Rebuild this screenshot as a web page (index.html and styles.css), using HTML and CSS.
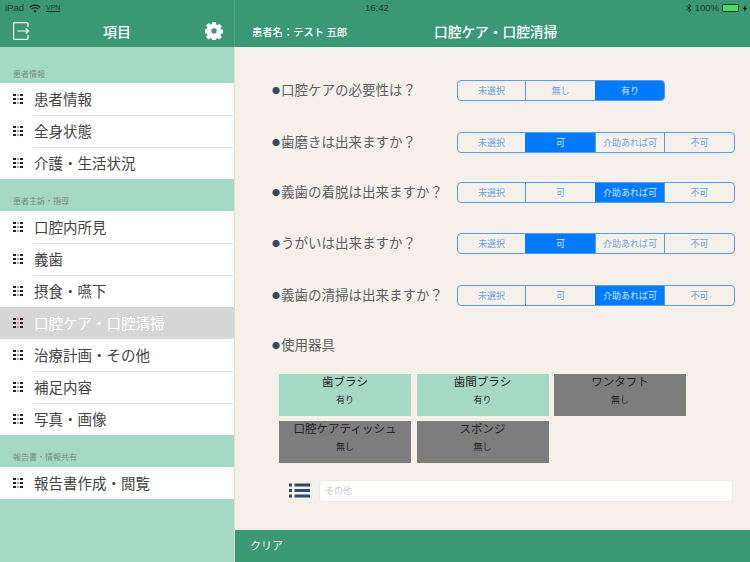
FILE: index.html
```html
<!DOCTYPE html>
<html lang="ja">
<head>
<meta charset="utf-8">
<title>口腔ケア・口腔清掃</title>
<link rel="stylesheet" href="styles.css">
</head>
<body>
<div class="app">
  <aside class="side">
    <header class="side-head">
      <div class="status">
        <span>iPad</span>
        <svg class="wifi" width="12" height="9" viewBox="0 0 12 9" fill="none" stroke="#15281f" stroke-width="1.300"><path d="M0.800 3.200a7.500 7.500 0 0 1 10.400 0"/><path d="M2.700 5.100a4.800 4.800 0 0 1 6.600 0"/><path d="M6 8.800 4.400 7a2.300 2.300 0 0 1 3.200 0Z" fill="#15281f" stroke="none"/></svg>
        <span class="vpn">VPN</span>
      </div>
      <div class="side-bar">
        <svg class="exit" width="16" height="18" viewBox="0 0 16 18" fill="none" stroke="#fff" stroke-width="1.200"><path d="M15 5V1.800A1.200 1.200 0 0 0 13.800 .6H1.800A1.200 1.200 0 0 0 .6 1.800v14.400a1.200 1.200 0 0 0 1.200 1.200h12a1.200 1.200 0 0 0 1.200-1.200V13"/><path d="M4.500 9H15.500M12.800 6.500 15.500 9l-2.700 2.500"/></svg>
        <span class="side-title">項目</span>
        <svg class="gear" width="18" height="18" viewBox="0 0 18 18"><path fill="#fff" stroke="#fff" stroke-width="0.800" stroke-linejoin="round" fill-rule="evenodd" d="M7.600 .6h2.800l.5 2.300 1.500.6 2-1.300 2 2-1.300 2 .6 1.500 2.300.5v2.800l-2.300.5-.6 1.500 1.300 2-2 2-2-1.300-1.500.6-.5 2.300H7.600l-.5-2.300-1.500-.6-2 1.300-2-2 1.300-2-.6-1.500-2.300-.5V7.600l2.300-.5.600-1.500-1.300-2 2-2 2 1.300 1.500-.6ZM9 5.800a3.200 3.200 0 1 0 0 6.400 3.200 3.200 0 0 0 0-6.400Z"/></svg>
      </div>
    </header>
    <div class="sec sec-first">患者情報</div>
    <ul class="list">
      <li class="row"><i class="dots"></i><span class="lbl">患者情報</span></li>
      <li class="row"><i class="dots"></i><span class="lbl">全身状態</span></li>
      <li class="row"><i class="dots"></i><span class="lbl">介護・生活状況</span></li>
    </ul>
    <div class="sec">患者主訴・指導</div>
    <ul class="list">
      <li class="row"><i class="dots"></i><span class="lbl">口腔内所見</span></li>
      <li class="row"><i class="dots"></i><span class="lbl">義歯</span></li>
      <li class="row"><i class="dots"></i><span class="lbl">摂食・嚥下</span></li>
      <li class="row on"><i class="dots"></i><span class="lbl">口腔ケア・口腔清掃</span></li>
      <li class="row"><i class="dots"></i><span class="lbl">治療計画・その他</span></li>
      <li class="row"><i class="dots"></i><span class="lbl">補足内容</span></li>
      <li class="row"><i class="dots"></i><span class="lbl">写真・画像</span></li>
    </ul>
    <div class="sec">報告書・情報共有</div>
    <ul class="list">
      <li class="row"><i class="dots"></i><span class="lbl">報告書作成・閲覧</span></li>
    </ul>
  </aside>
  <main class="main">
    <header class="main-head">
      <div class="status status-main">
        <span class="clock">16:42</span>
        <div class="status-right">
          <svg width="6" height="10" viewBox="0 0 6 10" fill="none" stroke="#1c3a2c" stroke-width="0.900"><path d="M0.500 2.800 5 7 3 9V1l2 2L0.500 7.200"/></svg>
          <span>100%</span>
          <span class="batt"><span class="batt-fill"></span></span>
          <svg class="bolt" width="4" height="7" viewBox="0 0 4 7"><path d="M2.500 0 0 4h1.500L1.200 7 4 3H2.400Z" fill="#111"/></svg>
        </div>
      </div>
      <div class="main-bar">
        <span class="patient">患者名：テスト 五郎</span>
        <span class="main-title">口腔ケア・口腔清掃</span>
      </div>
    </header>
    <div class="content">
      <div class="q q1">
        <span class="qt"><span class="dot">●</span>口腔ケアの必要性は？</span>
        <div class="seg seg3"><span>未選択</span><span>無し</span><span class="sel">有り</span></div>
      </div>
      <div class="q q2">
        <span class="qt"><span class="dot">●</span>歯磨きは出来ますか？</span>
        <div class="seg"><span>未選択</span><span class="sel">可</span><span>介助あれば可</span><span>不可</span></div>
      </div>
      <div class="q q3">
        <span class="qt"><span class="dot">●</span>義歯の着脱は出来ますか？</span>
        <div class="seg"><span>未選択</span><span>可</span><span class="sel">介助あれば可</span><span>不可</span></div>
      </div>
      <div class="q q4">
        <span class="qt"><span class="dot">●</span>うがいは出来ますか？</span>
        <div class="seg"><span>未選択</span><span class="sel">可</span><span>介助あれば可</span><span>不可</span></div>
      </div>
      <div class="q q5">
        <span class="qt"><span class="dot">●</span>義歯の清掃は出来ますか？</span>
        <div class="seg"><span>未選択</span><span>可</span><span class="sel">介助あれば可</span><span>不可</span></div>
      </div>
      <div class="tools-label qt"><span class="dot">●</span>使用器具</div>
      <div class="tools">
        <div class="tool yes"><b>歯ブラシ</b><small>有り</small></div>
        <div class="tool yes"><b>歯間ブラシ</b><small>有り</small></div>
        <div class="tool no"><b>ワンタフト</b><small>無し</small></div>
        <div class="tool no"><b>口腔ケアティッシュ</b><small>無し</small></div>
        <div class="tool no"><b>スポンジ</b><small>無し</small></div>
      </div>
      <div class="other">
        <svg width="21" height="15" viewBox="0 0 21 15" fill="#2f4a68"><rect x="0" y="0.500" width="3" height="3"/><rect x="0" y="6" width="3" height="3"/><rect x="0" y="11.500" width="3" height="3"/><rect x="5.500" y="0.500" width="15.500" height="3"/><rect x="5.500" y="6" width="15.500" height="3"/><rect x="5.500" y="11.500" width="15.500" height="3"/></svg>
        <div class="input">その他</div>
      </div>
    </div>
    <footer class="foot">クリア</footer>
  </main>
</div>
</body>
</html>
```
FILE: styles.css
```css
* { box-sizing: border-box; }
html, body { margin: 0; padding: 0; }
body {
  width: 750px;
  height: 562px;
  overflow: hidden;
  font-family: "Noto Sans CJK JP", "Liberation Sans", sans-serif;
}
ul { list-style: none; margin: 0; padding: 0; }
.app { display: flex; width: 750px; height: 562px; }

.side {
  width: 235px;
  flex: none;
  background: #a6d9c5;
  border-right: 1px solid #d9e0da;
}
.side-head, .main-head { height: 47px; background: #3b9776; color: #fff; }
.side-head { border-right: 1px solid #4fa283; margin-right: -1px; }
.status {
  height: 15px;
  padding: 1px 0 0 5px;
  display: flex;
  align-items: center;
  gap: 5px;
  font: 9.500px/14px "Liberation Sans", sans-serif;
  color: #1c3a2c;
}
.vpn {
  font-size: 7px;
  line-height: 7px;
  border-bottom: 1px solid #1c3a2c;
}
.side-bar {
  height: 32px;
  display: flex;
  align-items: center;
  justify-content: space-between;
  padding: 0 11px 0 13px;
  position: relative;
}
.side-title {
  position: absolute;
  left: 0;
  right: 0;
  text-align: center;
  font-size: 14px;
  font-weight: 500;
}
.sec {
  height: 32px;
  padding: 15px 0 0 13px;
  font-size: 8px;
  line-height: 13px;
  color: #6f8f83;
}
.sec-first { height: 36px; padding-top: 20px; }
.list { background: #fff; }
.row {
  height: 32px;
  display: flex;
  align-items: center;
  position: relative;
  padding-left: 13px;
  font-size: 14.500px;
  color: #444;
}
.row + .row::before {
  content: "";
  position: absolute;
  top: 0;
  left: 33px;
  right: 0;
  height: 1px;
  background: #e4e4e4;
}
.row.on { background: #d6d6d6; color: #fff; }
.row.on::before, .row.on + .row::before { display: none; }
.dots {
  width: 10px;
  height: 10px;
  margin-right: 11px;
  background:
    linear-gradient(#222 0 0) 0 0 / 3px 2px,
    linear-gradient(#e08a8a 0 0) 4px 0 / 2px 2px,
    linear-gradient(#222 0 0) 7px 0 / 3px 2px,
    linear-gradient(#222 0 0) 0 4px / 3px 2px,
    linear-gradient(#e08a8a 0 0) 4px 4px / 2px 2px,
    linear-gradient(#222 0 0) 7px 4px / 3px 2px,
    linear-gradient(#222 0 0) 0 8px / 3px 2px,
    linear-gradient(#e08a8a 0 0) 4px 8px / 2px 2px,
    linear-gradient(#222 0 0) 7px 8px / 3px 2px;
  background-repeat: no-repeat;
}
.lbl { line-height: 20px; margin-top: -1px; }

.main { flex: 1; display: flex; flex-direction: column; background: #f5f0e9; min-width: 0; }
.status-main { padding: 1px 0 0 130px; position: relative; }
.clock { font-size: 9.500px; }
.status-right {
  position: absolute;
  right: 3px;
  top: 1px;
  display: flex;
  align-items: center;
  gap: 3px;
}
.batt {
  width: 17px;
  height: 8px;
  border: 1px solid #1c3a2c;
  border-radius: 1.500px;
  display: block;
}
.batt-fill { display: block; height: 100%; background: #4cd964; }
.bolt { margin-left: 1px; }
.main-bar {
  height: 32px;
  display: flex;
  align-items: center;
  padding-left: 17px;
  position: relative;
}
.patient { font-size: 10.300px; font-weight: 500; }
.main-title {
  font-size: 13.700px;
  font-weight: 500;
  position: absolute;
  left: 199px;
}
.content { flex: 1; display: flex; flex-direction: column; padding-left: 37px; }
.q { display: flex; align-items: center; justify-content: space-between; height: 21px; padding-right: 15px; }
.q1 { margin-top: 33px; }
.q2 { margin-top: 31px; }
.q3 { margin-top: 29px; }
.q4 { margin-top: 30px; }
.q5 { margin-top: 31px; }
.qt { font-size: 13.500px; line-height: 18px; color: #5a5f66; white-space: nowrap; margin-top: -1px; }
.dot { display: inline-block; width: 9px; font-size: 8px; color: #34495e; vertical-align: 1.500px; }
.seg {
  height: 21px;
  display: flex;
  flex: none;
  width: 278px;
  border: 1px solid #5d9de8;
  border-radius: 4px;
  overflow: hidden;
}
.seg3 { width: 208px; margin-right: 70px; }
.seg span {
  flex: none;
  text-align: center;
  font-size: 9px;
  line-height: 19px;
  color: #6aa3e6;
  white-space: nowrap;
  border-left: 1px solid #5d9de8;
}
.seg span:nth-child(1) { width: 67px; border-left: 0; }
.seg span:nth-child(2) { width: 70px; }
.seg span:nth-child(3) { width: 69px; }
.seg span:nth-child(4) { width: 70px; }
.seg .sel { background: #007aff; color: #d5e8ff; border-left-color: #007aff; }
.tools-label { margin-top: 28px; line-height: 20px; }
.tools {
  display: grid;
  grid-template-columns: repeat(3, 132px);
  column-gap: 5.500px;
  row-gap: 5px;
  margin: 18px 0 0 7px;
}
.tool {
  height: 42px;
  display: flex;
  flex-direction: column;
  align-items: center;
  color: #222;
}
.tool b { font-weight: 400; font-size: 11.500px; line-height: 15px; }
.tool small { font-size: 9px; line-height: 12px; margin-top: 5px; }
.tool.yes { background: #a6d9c5; }
.tool.no { background: #7d7d7d; }
.other { display: flex; align-items: center; gap: 9px; margin-top: 17px; padding-left: 17px; }
.input {
  width: 414px;
  height: 22px;
  background: #fff;
  border: 1px solid #ece9e3;
  border-radius: 4px;
  padding-left: 5px;
  font-size: 9px;
  line-height: 20px;
  color: #c9c9c9;
}
.foot {
  height: 32px;
  flex: none;
  background: #3b9776;
  color: #e8f3ee;
  font-size: 11px;
  line-height: 30px;
  padding-left: 15px;
}
```
